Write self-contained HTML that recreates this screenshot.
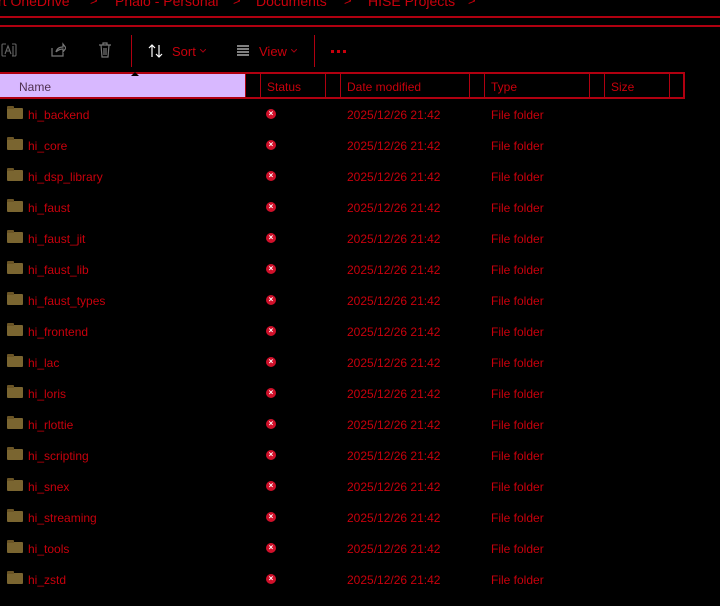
<!DOCTYPE html>
<html><head><style>
body{margin:0;width:720px;height:598px;background:#000;overflow:hidden;position:relative;font-family:"Liberation Sans",sans-serif;font-size:12px;color:#c8000c}
.a{position:absolute;white-space:nowrap}
.hl{position:absolute;left:0;width:720px;height:2px;background:#b00010}
.vl{position:absolute;width:2px;background:#b00010}
.row{position:absolute;left:0;width:720px;height:31px}
.fold{position:absolute;left:7px;top:-2px;width:16px;height:11px;background:#7a6530;border-radius:1px}
.fold:before{content:"";position:absolute;left:0;top:-2px;width:7px;height:3px;background:#6a5425;border-radius:1px 1px 0 0}
.st{position:absolute;left:266px;top:-1px;width:10px;height:10px;border-radius:50%;background:#d0102a;color:#fff;font-size:8px;line-height:10px;text-align:center;font-weight:bold}
.dot{position:absolute;top:50px;width:3px;height:3px;background:#c8000c}
</style></head><body>
<div class="a" style="left:-2px;top:-7px;font-size:14px">rt OneDrive</div>
<div class="a" style="left:90px;top:-7px;font-size:13px">&gt;</div>
<div class="a" style="left:115px;top:-7px;font-size:14px">Phalo - Personal</div>
<div class="a" style="left:233px;top:-7px;font-size:13px">&gt;</div>
<div class="a" style="left:256px;top:-7px;font-size:14px">Documents</div>
<div class="a" style="left:344px;top:-7px;font-size:13px">&gt;</div>
<div class="a" style="left:368px;top:-7px;font-size:14px">HISE Projects</div>
<div class="a" style="left:468px;top:-7px;font-size:13px">&gt;</div>
<div class="hl" style="top:16px;height:2px"></div>
<div class="hl" style="top:25px;height:2px"></div>
<svg class="a" style="left:1px;top:43px" width="16" height="16"><path d="M5 1h-3q-1 0-1 1v10q0 1 1 1h3M11 1h3q1 0 1 1v10q0 1-1 1h-3M4 11l3-8 3 8M5 8h4M12 3v10" fill="none" stroke="#666" stroke-width="1.1"/></svg>
<svg class="a" style="left:50px;top:42px" width="16" height="16"><path d="M2 6v8h11v-3M6 10c1-4 4-5 7-5V2l3 4-3 4V7c-3 0-5 1-7 3" fill="none" stroke="#777" stroke-width="1.2"/></svg>
<svg class="a" style="left:98px;top:42px" width="14" height="16"><path d="M1 3h12M5 3V1h4v2M3 3l1 12h6l1-12M6 6v7M8 6v7" fill="none" stroke="#777" stroke-width="1.2"/></svg>
<div class="vl" style="left:131px;top:35px;height:32px;width:1px"></div>
<svg class="a" style="left:148px;top:43px" width="16" height="16"><path d="M4 14V2M1 5l3-3 3 3M11 2v12M8 11l3 3 3-3" fill="none" stroke="#fff" stroke-width="1.2"/></svg>
<div class="a" style="left:172px;top:44px;font-size:13px">Sort</div>
<svg class="a" style="left:200px;top:49px" width="6" height="4"><path d="M0 0l3 3 3-3" fill="none" stroke="#a00010" stroke-width="1"/></svg>
<svg class="a" style="left:237px;top:45px" width="12" height="12"><path d="M0 1h12M0 4h12M0 7h12M0 10h12" stroke="#fff" stroke-width="1"/></svg>
<div class="a" style="left:259px;top:44px;font-size:13px">View</div>
<svg class="a" style="left:291px;top:49px" width="6" height="4"><path d="M0 0l3 3 3-3" fill="none" stroke="#a00010" stroke-width="1"/></svg>
<div class="vl" style="left:314px;top:35px;height:32px;width:1px"></div>
<div class="dot" style="left:331px"></div><div class="dot" style="left:337px"></div><div class="dot" style="left:343px"></div>
<div class="hl" style="top:72px;width:684px"></div>
<div class="hl" style="top:97px;width:684px"></div>
<div class="a" style="left:0;top:74px;width:245px;height:23px;background:#d8b8ff"></div>
<div class="a" style="left:131px;top:72px;width:0;height:0;border:4px solid transparent;border-bottom-color:#000;border-top:0"></div>
<div class="a" style="left:19px;top:80px;color:#503050">Name</div>
<div class="vl" style="left:245px;top:74px;height:23px;width:1px"></div>
<div class="vl" style="left:260px;top:74px;height:23px;width:1px"></div>
<div class="vl" style="left:325px;top:74px;height:23px;width:1px"></div>
<div class="vl" style="left:340px;top:74px;height:23px;width:1px"></div>
<div class="vl" style="left:469px;top:74px;height:23px;width:1px"></div>
<div class="vl" style="left:484px;top:74px;height:23px;width:1px"></div>
<div class="vl" style="left:589px;top:74px;height:23px;width:1px"></div>
<div class="vl" style="left:604px;top:74px;height:23px;width:1px"></div>
<div class="vl" style="left:669px;top:74px;height:23px;width:1px"></div>
<div class="vl" style="left:683px;top:72px;height:27px;width:2px"></div>
<div class="a" style="left:267px;top:80px">Status</div>
<div class="a" style="left:347px;top:80px">Date modified</div>
<div class="a" style="left:491px;top:80px">Type</div>
<div class="a" style="left:611px;top:80px">Size</div>
<div id="rows"></div>
<script>
var n=["hi_backend","hi_core","hi_dsp_library","hi_faust","hi_faust_jit","hi_faust_lib","hi_faust_types","hi_frontend","hi_lac","hi_loris","hi_rlottie","hi_scripting","hi_snex","hi_streaming","hi_tools","hi_zstd"],h="";
n.forEach(function(s,i){var y=110+i*31;h+='<div class="row" style="top:'+y+'px"><div class="fold"></div><div class="a" style="left:28px;top:-2px">'+s+'</div><div class="st">×</div><div class="a" style="left:347px;top:-2px">2025/12/26 21:42</div><div class="a" style="left:491px;top:-2px">File folder</div></div>'});
document.getElementById("rows").innerHTML=h;
</script>
</body></html>
